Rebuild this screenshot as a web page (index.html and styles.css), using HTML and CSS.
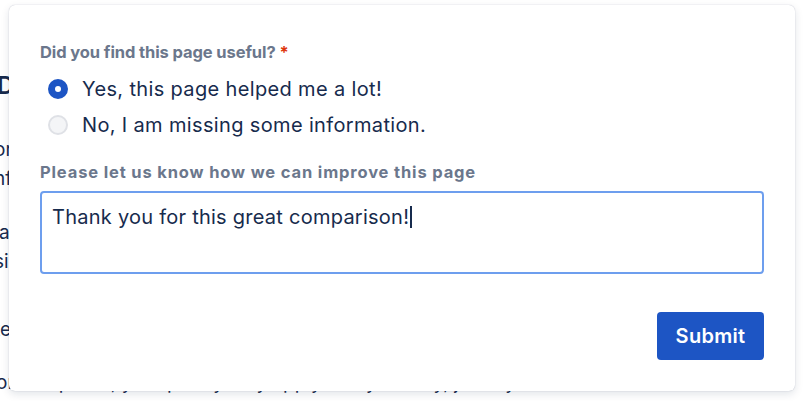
FILE: index.html
```html
<!DOCTYPE html>
<html lang="en">
<head>
<meta charset="utf-8">
<title>Feedback</title>
<link rel="stylesheet" href="styles.css">
</head>
<body>
<div class="page">
  <h2 class="page-title">Do</h2>
  <p class="page-text"><span class="line shift">or</span><span class="line shift">nf</span></p>
  <p class="page-text p2"><span class="line">a</span><span class="line shift">si</span></p>
  <p class="page-text p3"><span class="line shift">te</span></p>
  <p class="page-text p4">or compared, you quickly may apply it to your day, just try.</p>
</div>

<div class="card">
  <div class="field-label first">Did you find this page useful?<span class="req">*</span></div>
  <div class="radios">
    <div class="radio-row">
      <span class="radio checked"></span>
      <span class="radio-text">Yes, this page helped me a lot!</span>
    </div>
    <div class="radio-row">
      <span class="radio"></span>
      <span class="radio-text">No, I am missing some information.</span>
    </div>
  </div>
  <div class="field-label second">Please let us know how we can improve this page</div>
  <div class="textarea">Thank you for this great comparison!<span class="caret"></span></div>
  <div class="actions">
    <button class="submit" type="button">Submit</button>
  </div>
</div>
</body>
</html>
```

FILE: styles.css
```css
html, body {
  margin: 0;
  padding: 0;
  background: #ffffff;
}
body {
  font-family: Inter, "Noto Sans", "Liberation Sans", sans-serif;
  color: #172b4d;
  width: 806px;
  height: 401px;
  overflow: hidden;
  position: relative;
}
.page {
  padding-top: 71px;
  white-space: nowrap;
}
.page-title {
  margin: 0 0 0 -3px;
  font-size: 24px;
  line-height: 30px;
  font-weight: 600;
}
.page-text {
  margin: 34px 0 0 -1px;
  font-size: 19px;
  line-height: 29px;
}
.line {
  display: block;
}
.line.shift {
  margin-left: -5px;
}
.page-text.p2 { margin-top: 25px; }
.page-text.p3 { margin-top: 39px; }
.page-text.p4 { margin-top: 24px; margin-left: -4px; }

.card {
  position: absolute;
  left: 9px;
  top: 5px;
  width: 786px;
  height: 386px;
  box-sizing: border-box;
  background: #ffffff;
  border-radius: 6px;
  box-shadow: 0 0 1px rgba(9, 30, 66, 0.31), 0 3px 8px rgba(9, 30, 66, 0.12);
  padding: 37px 31px 31px 31px;
  display: flex;
  flex-direction: column;
}
.field-label {
  font-size: 16.5px;
  line-height: 20px;
  font-weight: 700;
  color: #6b778c;
  white-space: nowrap;
}
.field-label.first {
  letter-spacing: -0.1px;
}
.req {
  color: #de350b;
  margin-left: 4px;
}
.field-label.second {
  margin-top: 19px;
  letter-spacing: 0.85px;
}
.radios {
  margin-top: 9px;
  display: flex;
  flex-direction: column;
}
.radio-row {
  height: 36px;
  display: flex;
  align-items: center;
  padding-left: 8px;
}
.radio {
  width: 20px;
  height: 20px;
  box-sizing: border-box;
  border-radius: 50%;
  border: 2px solid #dfe1e6;
  background: #f4f5f7;
  margin-right: 14px;
  flex: none;
  display: flex;
  align-items: center;
  justify-content: center;
}
.radio.checked {
  border-color: #1d55c4;
  background: #1d55c4;
}
.radio.checked::after {
  content: "";
  width: 6px;
  height: 6px;
  border-radius: 50%;
  background: #ffffff;
}
.radio-text {
  font-size: 20px;
  line-height: 24px;
  letter-spacing: 0.35px;
  color: #172b4d;
}
.textarea {
  margin-top: 9px;
  height: 83px;
  box-sizing: border-box;
  border: 2px solid #6d9eee;
  border-radius: 4px;
  padding: 12px 10px;
  font-size: 20px;
  line-height: 24px;
  letter-spacing: 0.25px;
  color: #172b4d;
}
.caret {
  display: inline-block;
  width: 1.5px;
  height: 22px;
  background: #172b4d;
  vertical-align: -4px;
  margin-left: 1px;
}
.actions {
  margin-top: 38px;
  display: flex;
  justify-content: flex-end;
}
.submit {
  width: 107px;
  height: 48px;
  border: none;
  border-radius: 4px;
  background: #1d55c4;
  color: #ffffff;
  font-family: Inter, "Noto Sans", "Liberation Sans", sans-serif;
  font-size: 20px;
  font-weight: 600;
  letter-spacing: 0.3px;
  cursor: pointer;
}
```
